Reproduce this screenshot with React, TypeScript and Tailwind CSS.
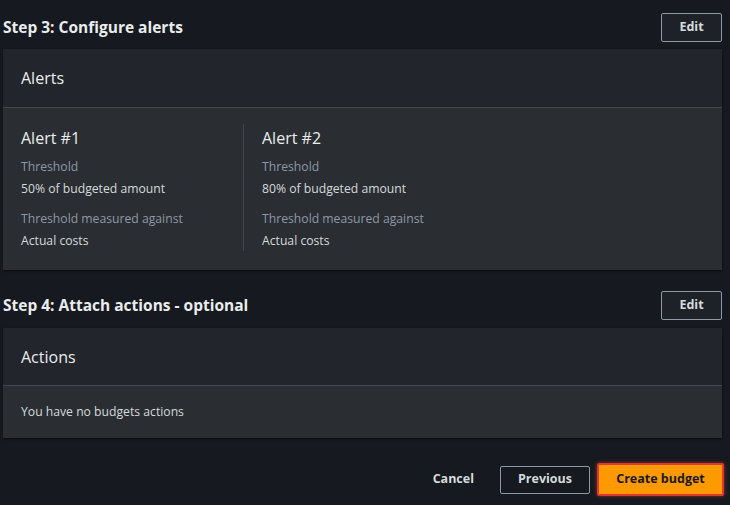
import * as React from "react";

const alerts = [
  { name: "Alert #1", threshold: "50% of budgeted amount", against: "Actual costs" },
  { name: "Alert #2", threshold: "80% of budgeted amount", against: "Actual costs" },
];

const EditButton = () => (
  <button className="h-[29px] w-[61px] rounded-[2px] border border-[#8d99a8] bg-[#1e2228] text-[12.5px] font-bold text-[#d5dbdb]">
    Edit
  </button>
);

const StepHeader = ({ title }: { title: string }) => (
  <div className="flex items-center justify-between">
    <h2 className="text-[15.5px] font-bold text-[#eaeded]">{title}</h2>
    <EditButton />
  </div>
);

const App = () => {
  return (
    <div
      className="min-h-[505px] w-[730px] bg-[#16191f] pl-[3px] pr-[8px] pt-[13px]"
      style={{ fontFamily: '"Open Sans", "Noto Sans", sans-serif' }}
    >
      {/* step 3 */}
      <StepHeader title="Step 3: Configure alerts" />
      <div className="mt-[7px] bg-[#2a2d32] shadow-[0_1px_2px_rgba(0,0,0,0.6)]">
        <div className="flex h-[59px] items-center border-b border-[#414750] bg-[#22252b] pl-[18px]">
          <span className="text-[16px] text-[#eaeded]">Alerts</span>
        </div>
        <div className="flex pb-[19px] pl-[18px] pt-[16px]">
          {alerts.map((a, i) => (
            <div
              key={a.name}
              className={
                i === 0
                  ? "w-[223px] border-r border-[#414750]"
                  : "pl-[18px]"
              }
            >
              <div className="-mt-[1px] pb-[2px] text-[16px] font-medium leading-[30px] text-[#eaeded]">{a.name}</div>
              <div className="mt-[2px] text-[12.2px] leading-[20px] text-[#8d99a8]">Threshold</div>
              <div className="mt-[2px] text-[12.2px] leading-[20px] text-[#d5dbdb]">{a.threshold}</div>
              <div className="mt-[10px] text-[12.2px] leading-[20px] text-[#8d99a8]">
                Threshold measured against
              </div>
              <div className="mt-[2px] text-[12.2px] leading-[20px] text-[#d5dbdb]">{a.against}</div>
            </div>
          ))}
        </div>
      </div>

      {/* step 4 */}
      <div className="mt-[21px]">
        <StepHeader title="Step 4: Attach actions - optional" />
      </div>
      <div className="mt-[8px] bg-[#2a2d32] shadow-[0_1px_2px_rgba(0,0,0,0.6)]">
        <div className="flex h-[58px] items-center border-b border-[#414750] bg-[#22252b] pl-[18px]">
          <span className="text-[16px] text-[#eaeded]">Actions</span>
        </div>
        <div className="flex h-[52px] items-center pl-[18px]">
          <span className="text-[12.2px] text-[#d5dbdb]">You have no budgets actions</span>
        </div>
      </div>

      {/* footer buttons */}
      <div className="mt-[25px] flex items-center justify-end gap-[7px]">
        <button className="mr-[19px] text-[12.5px] font-bold text-[#d5dbdb]">Cancel</button>
        <button className="h-[28px] w-[90px] rounded-[2px] border border-[#8d99a8] text-[12.5px] font-bold text-[#d5dbdb]">
          Previous
        </button>
        <button className="-mr-[2px] h-[33px] w-[127px] rounded-[2px] border-2 border-[#e0372f] bg-[#ff9900] text-[12.5px] font-bold text-[#16191f] shadow-[0_0_4px_rgba(255,80,60,0.5)]">
          Create budget
        </button>
      </div>
    </div>
  );
};

export default App;
